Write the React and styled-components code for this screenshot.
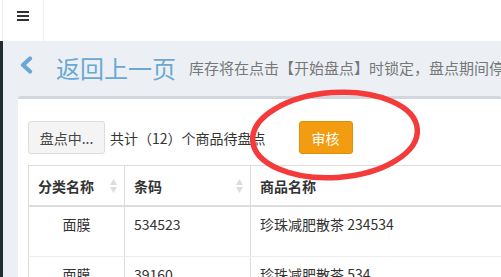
import React from "react";
import styled, { createGlobalStyle } from "styled-components";

const GlobalStyle = createGlobalStyle`
  html, body { margin: 0; padding: 0; }
  body {
    font-family: "Noto Sans CJK SC", "Noto Sans", sans-serif;
    color: #333;
    background: #ecf0f5;
    overflow: hidden;
  }
`;

const Page = styled.div`
  position: relative;
  width: 501px;
  height: 277px;
  overflow: hidden;
`;

const TopBar = styled.header`
  height: 41px;
  background: #fff;
  display: flex;
  padding-left: 2px;
`;

const Toggle = styled.div`
  width: 42px;
  border-left: 1px solid #eee;
  border-right: 1px solid #eee;
  display: flex;
  justify-content: center;
  padding-top: 11px;
  box-sizing: border-box;
`;

const Body = styled.div`
  display: flex;
  height: 236px;
`;

const Sidebar = styled.aside`
  width: 3px;
  background: #222d32;
  flex-shrink: 0;
`;

const Main = styled.main`
  flex: 1;
  padding-left: 15px;
  min-width: 0;
`;

const ContentHeader = styled.div`
  height: 55px;
  display: flex;
  align-items: flex-end;
  padding-bottom: 14px;
  box-sizing: border-box;
  white-space: nowrap;
`;

const BackLink = styled.a`
  display: flex;
  align-items: baseline;
  color: #6aa8d3;
  text-decoration: none;
  font-size: 24px;
  line-height: 28px;
`;

const Chevron = styled.svg`
  width: 14px;
  height: 18px;
  margin: 0 23px 0 1px;
  align-self: center;
  position: relative;
  top: -3px;
`;

const Hint = styled.small`
  font-size: 15px;
  color: #777;
  margin-left: 13px;
  line-height: 28px;
`;

const Box = styled.section`
  background: #fff;
  border-top: 3px solid #d2d6de;
  border-radius: 3px;
  padding: 22px 0 0 10px;
  height: 200px;
  box-sizing: border-box;
`;

const Toolbar = styled.div`
  display: flex;
  align-items: center;
  white-space: nowrap;
`;

const Button = styled.button`
  height: 33px;
  padding: 0 ${(p) => (p.$wide ? "10px" : "12px")};
  font-family: inherit;
  font-size: 14px;
  border-radius: 3px;
  border: 1px solid ${(p) => (p.$warning ? "#e08e0b" : "#ddd")};
  background: ${(p) => (p.$warning ? "#f39c12" : "#f4f4f4")};
  color: ${(p) => (p.$warning ? "#fff" : "#444")};
  box-sizing: border-box;
  width: ${(p) => p.$w}px;
  cursor: pointer;
`;

const Count = styled.span`
  font-size: 14px;
  margin-left: 5px;
  margin-right: 33px;
  color: #333;
`;

const Table = styled.table`
  margin-top: 11px;
  border-collapse: collapse;
  border: 1px solid #ddd;
  table-layout: fixed;
  width: 520px;
  font-size: 14px;
`;

const Th = styled.th`
  height: 39px;
  padding: 0 7px 0 9px;
  border-left: 1px solid #ddd;
  border-bottom: 2px solid #ddd;
  text-align: left;
  font-weight: bold;
  color: #333;
`;

const ThInner = styled.div`
  display: flex;
  align-items: center;
  justify-content: space-between;
`;

const Td = styled.td`
  height: 50px;
  padding: 3px 9px 18px;
  box-sizing: border-box;
  border-left: 1px solid #ddd;
  border-bottom: 1px solid #eee;
  text-align: ${(p) => (p.$center ? "center" : "left")};
  vertical-align: middle;
  color: #333;
`;

const Ring = styled.svg`
  position: absolute;
  left: 0;
  top: 0;
  pointer-events: none;
`;

const SortIcon = () => (
  <svg width="7" height="14" viewBox="0 0 7 14">
    <polygon points="3.5,0 7,6 0,6" fill="#ddd" />
    <polygon points="0,8 7,8 3.5,14" fill="#ddd" />
  </svg>
);

const rows = [
  { cat: "面膜", code: "534523", name: "珍珠减肥散茶 234534" },
  { cat: "面膜", code: "39160", name: "珍珠减肥散茶 534" },
];

export default function App() {
  return (
    <Page>
      <GlobalStyle />
      <TopBar>
        <Toggle>
          <svg width="12" height="10" viewBox="0 0 12 10">
            <rect x="0" y="0" width="12" height="2" fill="#333" />
            <rect x="0" y="4" width="12" height="2" fill="#333" />
            <rect x="0" y="8" width="12" height="2" fill="#333" />
          </svg>
        </Toggle>
      </TopBar>
      <Body>
        <Sidebar />
        <Main>
          <ContentHeader>
            <BackLink href="#">
              <Chevron viewBox="0 0 14 18">
                <polyline
                  points="11,2.5 4,9 11,15.5"
                  fill="none"
                  stroke="#6aa8d3"
                  strokeWidth="4.2"
                  strokeLinecap="round"
                  strokeLinejoin="round"
                />
              </Chevron>
              返回上一页
            </BackLink>
            <Hint>库存将在点击【开始盘点】时锁定，盘点期间停止出入库操作</Hint>
          </ContentHeader>
          <Box>
            <Toolbar>
              <Button $wide $w={77}>盘点中...</Button>
              <Count>共计（12）个商品待盘点</Count>
              <Button $warning $w={54}>审核</Button>
            </Toolbar>
            <Table>
              <colgroup>
                <col style={{ width: 96 }} />
                <col style={{ width: 126 }} />
                <col style={{ width: 298 }} />
              </colgroup>
              <thead>
                <tr>
                  <Th>
                    <ThInner>
                      分类名称
                      <SortIcon />
                    </ThInner>
                  </Th>
                  <Th>
                    <ThInner>
                      条码
                      <SortIcon />
                    </ThInner>
                  </Th>
                  <Th>
                    <ThInner>商品名称</ThInner>
                  </Th>
                </tr>
              </thead>
              <tbody>
                {rows.map((r, i) => (
                  <tr key={i}>
                    <Td $center>{r.cat}</Td>
                    <Td>{r.code}</Td>
                    <Td>{r.name}</Td>
                  </tr>
                ))}
              </tbody>
            </Table>
          </Box>
        </Main>
      </Body>
      <Ring width="501" height="277" viewBox="0 0 501 277">
        <ellipse
          cx="335"
          cy="135"
          rx="82.5"
          ry="42.5"
          fill="none"
          stroke="#f53a3a"
          strokeWidth="5.5"
          transform="rotate(-4 335 135)"
        />
      </Ring>
    </Page>
  );
}
